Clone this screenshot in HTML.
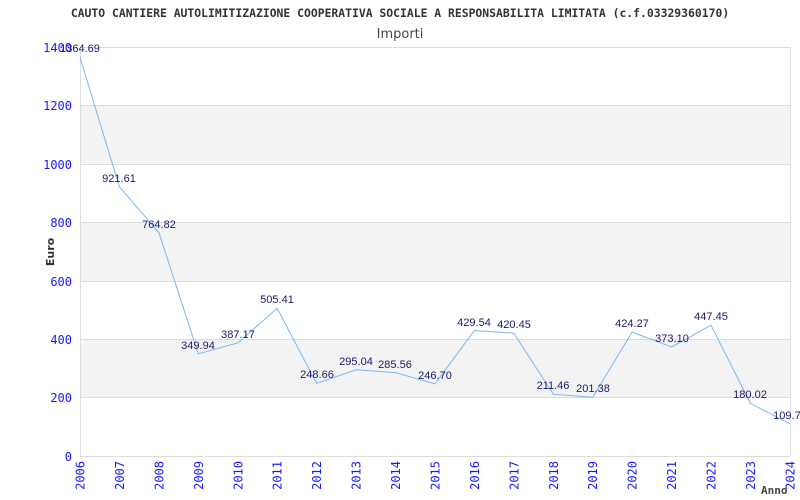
<!DOCTYPE html>
<html><head><meta charset="utf-8"><style>body{margin:0;background:#fff}svg{display:block}</style></head><body>
<svg width="800" height="500" xmlns="http://www.w3.org/2000/svg">
<rect width="800" height="500" fill="#fff"/>
<text x="400" y="17" text-anchor="middle" font-family="DejaVu Sans Mono, monospace" font-size="11.4" font-weight="bold" fill="#333">CAUTO CANTIERE AUTOLIMITIZAZIONE COOPERATIVA SOCIALE A RESPONSABILITA LIMITATA (c.f.03329360170)</text>
<text x="400" y="38" text-anchor="middle" font-family="DejaVu Sans, sans-serif" font-size="13" fill="#444">Importi</text>
<g fill="#f3f3f3"><rect x="80" y="105.4" width="710" height="58.4"/><rect x="80" y="222.6" width="710" height="58.4"/><rect x="80" y="339.2" width="710" height="58.4"/></g>
<g stroke="#ddd" stroke-width="1"><line x1="80" x2="790" y1="47.5" y2="47.5"/><line x1="80" x2="790" y1="105.5" y2="105.5"/><line x1="80" x2="790" y1="164.5" y2="164.5"/><line x1="80" x2="790" y1="222.5" y2="222.5"/><line x1="80" x2="790" y1="281.5" y2="281.5"/><line x1="80" x2="790" y1="339.5" y2="339.5"/><line x1="80" x2="790" y1="397.5" y2="397.5"/><line x1="80" x2="790" y1="456.5" y2="456.5"/><line x1="80.5" x2="80.5" y1="47" y2="456"/><line x1="790.5" x2="790.5" y1="47" y2="456"/></g>
<g font-family="DejaVu Sans Mono, monospace" font-size="12" fill="#1a1aff" text-anchor="end"><text x="72" y="52">1400</text><text x="72" y="110">1200</text><text x="72" y="169">1000</text><text x="72" y="227">800</text><text x="72" y="286">600</text><text x="72" y="344">400</text><text x="72" y="402">200</text><text x="72" y="461">0</text></g>
<text transform="translate(54,252) rotate(-90)" text-anchor="middle" font-family="DejaVu Sans, sans-serif" font-size="11" font-weight="bold" fill="#333">Euro</text>
<polyline fill="none" stroke="#7ab8f5" stroke-width="1" points="80,57.3 119.4,186.8 158.9,232.6 198.3,353.8 237.8,342.9 277.2,308.3 316.6,383.4 356.1,369.8 395.5,372.6 435,383.9 474.4,330.5 513.8,333.2 553.3,394.2 592.7,397.2 632.2,332.1 671.6,347 711,325.3 750.5,403.4 790,423.9"/>
<g font-family="Liberation Sans, sans-serif" font-size="11" fill="#1a1a6e" text-anchor="middle"><text x="80" y="52">1364.69</text><text x="119" y="182">921.61</text><text x="159" y="228">764.82</text><text x="198" y="349">349.94</text><text x="238" y="338">387.17</text><text x="277" y="303">505.41</text><text x="317" y="378">248.66</text><text x="356" y="365">295.04</text><text x="395" y="368">285.56</text><text x="435" y="379">246.70</text><text x="474" y="326">429.54</text><text x="514" y="328">420.45</text><text x="553" y="389">211.46</text><text x="593" y="392">201.38</text><text x="632" y="327">424.27</text><text x="672" y="342">373.10</text><text x="711" y="320">447.45</text><text x="750" y="398">180.02</text><text x="790" y="419">109.73</text></g>
<g font-family="DejaVu Sans Mono, monospace" font-size="12" fill="#1a1aff" text-anchor="end">
<text transform="translate(84.5,461) rotate(-90)">2006</text><text transform="translate(123.9,461) rotate(-90)">2007</text><text transform="translate(163.4,461) rotate(-90)">2008</text><text transform="translate(202.8,461) rotate(-90)">2009</text><text transform="translate(242.3,461) rotate(-90)">2010</text><text transform="translate(281.7,461) rotate(-90)">2011</text><text transform="translate(321.1,461) rotate(-90)">2012</text><text transform="translate(360.6,461) rotate(-90)">2013</text><text transform="translate(400,461) rotate(-90)">2014</text><text transform="translate(439.5,461) rotate(-90)">2015</text><text transform="translate(478.9,461) rotate(-90)">2016</text><text transform="translate(518.3,461) rotate(-90)">2017</text><text transform="translate(557.8,461) rotate(-90)">2018</text><text transform="translate(597.2,461) rotate(-90)">2019</text><text transform="translate(636.7,461) rotate(-90)">2020</text><text transform="translate(676.1,461) rotate(-90)">2021</text><text transform="translate(715.5,461) rotate(-90)">2022</text><text transform="translate(755,461) rotate(-90)">2023</text><text transform="translate(794.5,461) rotate(-90)">2024</text></g>
<text x="761" y="494" font-family="DejaVu Sans Mono, monospace" font-size="11" font-weight="bold" fill="#444">Anno</text>
</svg>
</body></html>
